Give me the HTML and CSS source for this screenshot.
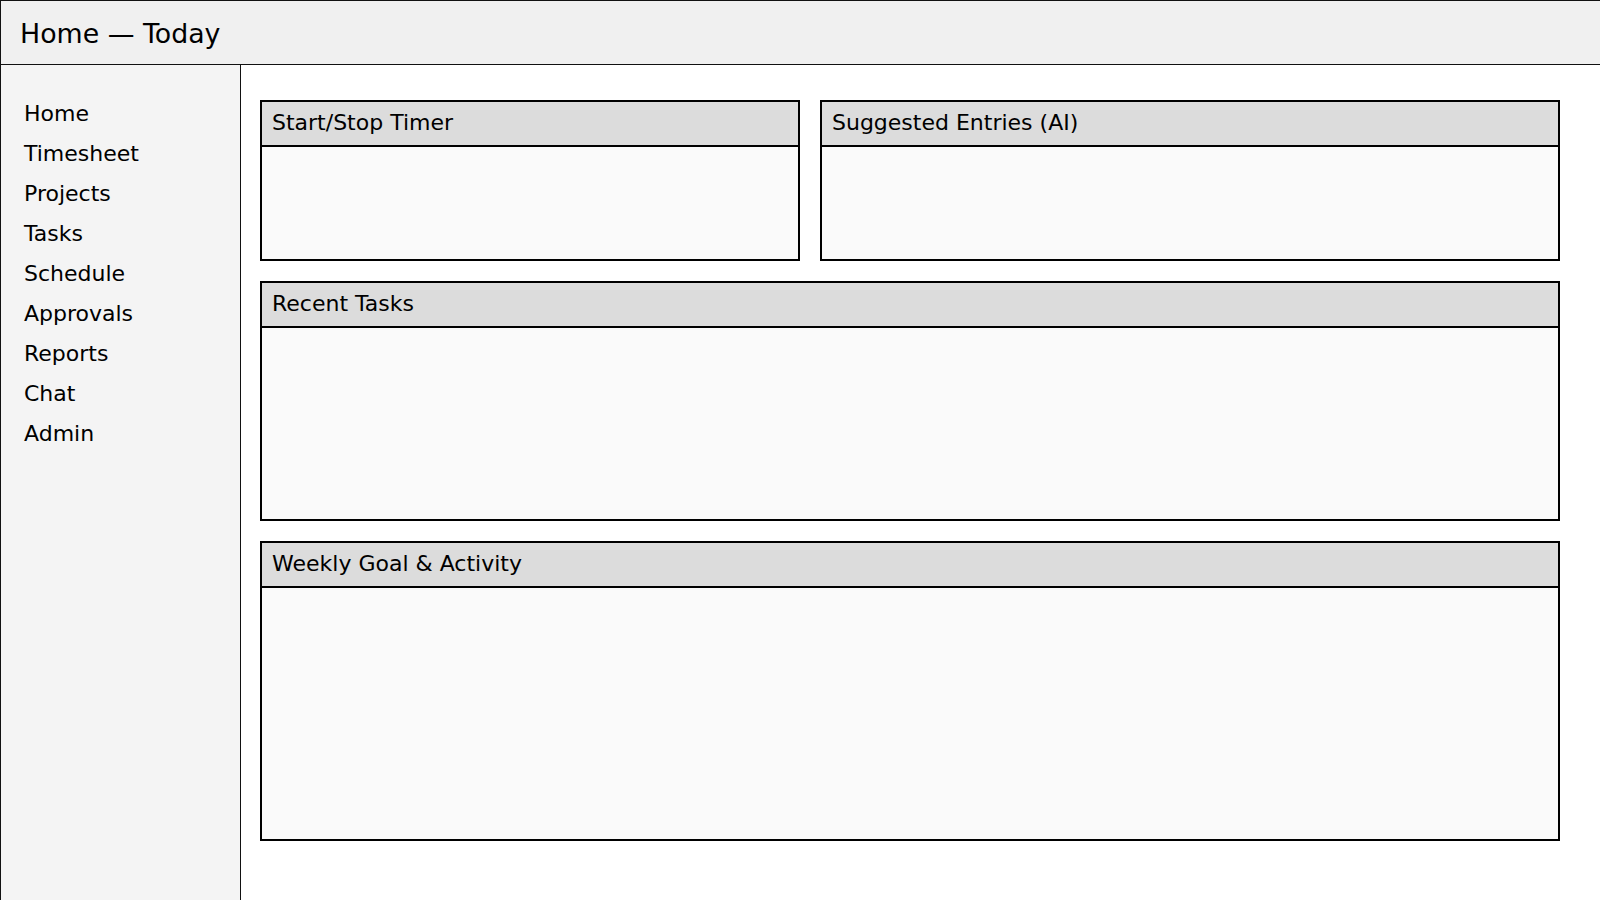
FILE: index.html
```html
<!DOCTYPE html>
<html>
<head>
<meta charset="utf-8">
<title>Home — Today</title>
<link rel="stylesheet" href="styles.css">
</head>
<body>
<div class="app">
  <header class="topbar">Home — Today</header>
  <div class="body">
    <nav class="sidebar">
      <div class="nav-item">Home</div>
      <div class="nav-item">Timesheet</div>
      <div class="nav-item">Projects</div>
      <div class="nav-item">Tasks</div>
      <div class="nav-item">Schedule</div>
      <div class="nav-item">Approvals</div>
      <div class="nav-item">Reports</div>
      <div class="nav-item">Chat</div>
      <div class="nav-item">Admin</div>
    </nav>
    <main class="main">
      <section class="panel">
        <div class="panel-head">Start/Stop Timer</div>
        <div class="panel-body"></div>
      </section>
      <section class="panel">
        <div class="panel-head">Suggested Entries (AI)</div>
        <div class="panel-body"></div>
      </section>
      <section class="panel wide">
        <div class="panel-head">Recent Tasks</div>
        <div class="panel-body"></div>
      </section>
      <section class="panel wide">
        <div class="panel-head">Weekly Goal &amp; Activity</div>
        <div class="panel-body"></div>
      </section>
    </main>
  </div>
</div>
</body>
</html>
```
FILE: styles.css
```css
* { box-sizing: border-box; }
html, body { margin: 0; padding: 0; background: #ffffff; }
body {
  font-family: "DejaVu Sans", "Liberation Sans", sans-serif;
  color: #000;
  width: 1600px;
  height: 900px;
  overflow: hidden;
}
.app {
  display: flex;
  flex-direction: column;
  height: 900px;
}
.topbar {
  height: 65px;
  flex: none;
  background: #f0f0f0;
  border-top: 1px solid #111;
  border-left: 1px solid #111;
  border-bottom: 1px solid #111;
  font-size: 26.8px;
  display: flex;
  align-items: center;
  padding: 2px 0 0 19px;
}
.body {
  flex: 1;
  display: flex;
  min-height: 0;
}
.sidebar {
  width: 241px;
  flex: none;
  background: #f4f4f4;
  border-left: 1px solid #111;
  border-right: 1px solid #111;
  padding: 29px 0 0 23px;
}
.nav-item {
  font-size: 22px;
  line-height: 40px;
  height: 40px;
}
.main {
  flex: 1;
  display: grid;
  grid-template-columns: 540px 740px;
  grid-template-rows: 161px 240px 300px;
  gap: 20px;
  padding: 35px 0 0 19px;
  align-content: start;
}
.panel {
  border: 2px solid #000;
  background: #fafafa;
  display: flex;
  flex-direction: column;
}
.panel.wide { grid-column: 1 / 3; }
.panel-head {
  height: 45px;
  flex: none;
  background: #dcdcdc;
  border-bottom: 2px solid #000;
  font-size: 22px;
  display: flex;
  align-items: center;
  padding: 0 0 2px 10px;
}
.panel-body { flex: 1; }
```
